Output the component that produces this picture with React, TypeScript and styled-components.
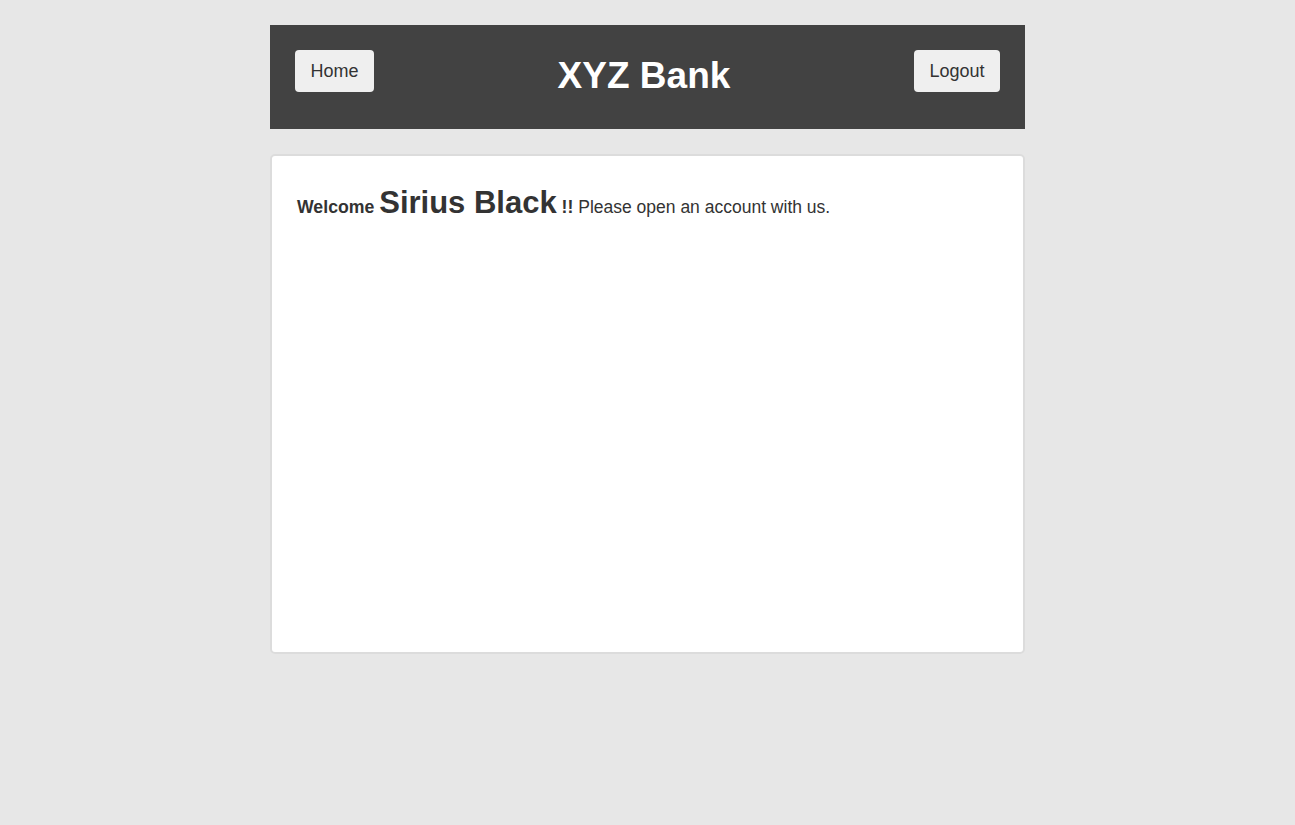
import React from 'react';
import styled, { createGlobalStyle } from 'styled-components';

const GlobalStyle = createGlobalStyle`
  html, body {
    margin: 0;
    padding: 0;
    background: #e7e7e7;
    font-family: 'Liberation Sans', Arial, sans-serif;
    color: #333;
  }
`;

const Page = styled.div`
  width: 755px;
  margin: 0 auto;
  padding-top: 25px;
`;

const Header = styled.header`
  height: 104px;
  box-sizing: border-box;
  background: #424242;
  padding: 25px;
  display: flex;
  align-items: flex-start;
  justify-content: space-between;
`;

const NavButton = styled.button`
  height: 42px;
  padding: 0 15.5px;
  border: none;
  border-radius: 4px;
  background: #efefef;
  color: #333;
  font-family: 'Liberation Sans', Arial, sans-serif;
  font-size: 18px;
  cursor: pointer;
`;

const Title = styled.h1`
  margin: 4px 0 0;
  color: #fff;
  font-size: 37px;
  font-weight: bold;
  line-height: 44px;
`;

const Card = styled.main`
  margin-top: 25px;
  height: 500px;
  box-sizing: border-box;
  background: #fff;
  border: 2px solid #dcdcdc;
  border-radius: 5px;
  padding: 27px 25px;
`;

const Greeting = styled.div`
  font-size: 17.5px;
  line-height: 40px;
`;

const Strong = styled.strong<{ $size?: number }>`
  font-size: ${({ $size }) => $size ?? 17.7}px;
  font-weight: bold;
`;

const App: React.FC = () => (
  <>
    <GlobalStyle />
    <Page>
      <Header>
        <NavButton>Home</NavButton>
        <Title>XYZ Bank</Title>
        <NavButton>Logout</NavButton>
      </Header>
      <Card>
        <Greeting>
          <Strong>Welcome</Strong> <Strong $size={31}>Sirius Black</Strong>{' '}
          <Strong>!!</Strong> Please open an account with us.
        </Greeting>
      </Card>
    </Page>
  </>
);

export default App;
